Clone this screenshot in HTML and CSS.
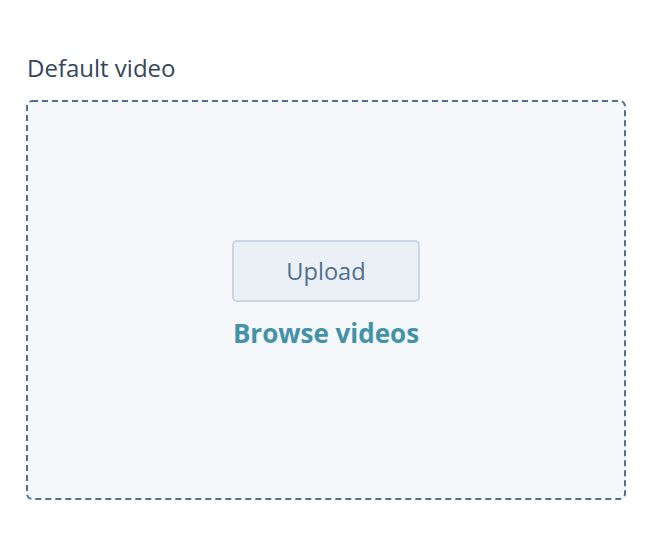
FILE: index.html
```html
<!DOCTYPE html>
<html>
<head>
<meta charset="utf-8">
<link rel="stylesheet" href="styles.css">
</head>
<body>
<div class="page">
  <label class="field-label">Default video</label>
  <div class="dropzone">
    <div class="actions">
      <button class="upload-btn">Upload</button>
      <a class="browse-link">Browse videos</a>
    </div>
  </div>
</div>
</body>
</html>
```
FILE: styles.css
```css
html, body {
  margin: 0;
  padding: 0;
  background: #ffffff;
}
.page {
  padding: 54px 36px 0 26px;
  font-family: "Open Sans", "Noto Sans", sans-serif;
}
.field-label {
  display: block;
  font-size: 24px;
  line-height: 28px;
  color: #33475b;
  padding-left: 1px;
  margin-bottom: 18px;
}
.dropzone {
  box-sizing: border-box;
  width: 600px;
  height: 400px;
  border-radius: 6px;
  background-color: #f5f8fa;
  background-image: url("data:image/svg+xml,%3Csvg xmlns='http://www.w3.org/2000/svg' width='600' height='400'%3E%3Crect x='1' y='1' width='598' height='398' rx='5' ry='5' fill='none' stroke='%23516f90' stroke-width='2' stroke-dasharray='6 4'/%3E%3C/svg%3E");
  display: flex;
  align-items: center;
  justify-content: center;
}
.actions {
  display: flex;
  flex-direction: column;
  align-items: center;
  margin-top: -10px;
}
.upload-btn {
  box-sizing: border-box;
  width: 188px;
  height: 62px;
  background: #eaf0f6;
  border: 2px solid #cbd6e2;
  border-radius: 5px;
  color: #516f90;
  font-family: "Open Sans", "Noto Sans", sans-serif;
  font-size: 23.6px;
  padding: 0;
}
.browse-link {
  margin-top: 14px;
  font-size: 26px;
  line-height: 34px;
  font-weight: 700;
  color: #4392a8;
}
```
